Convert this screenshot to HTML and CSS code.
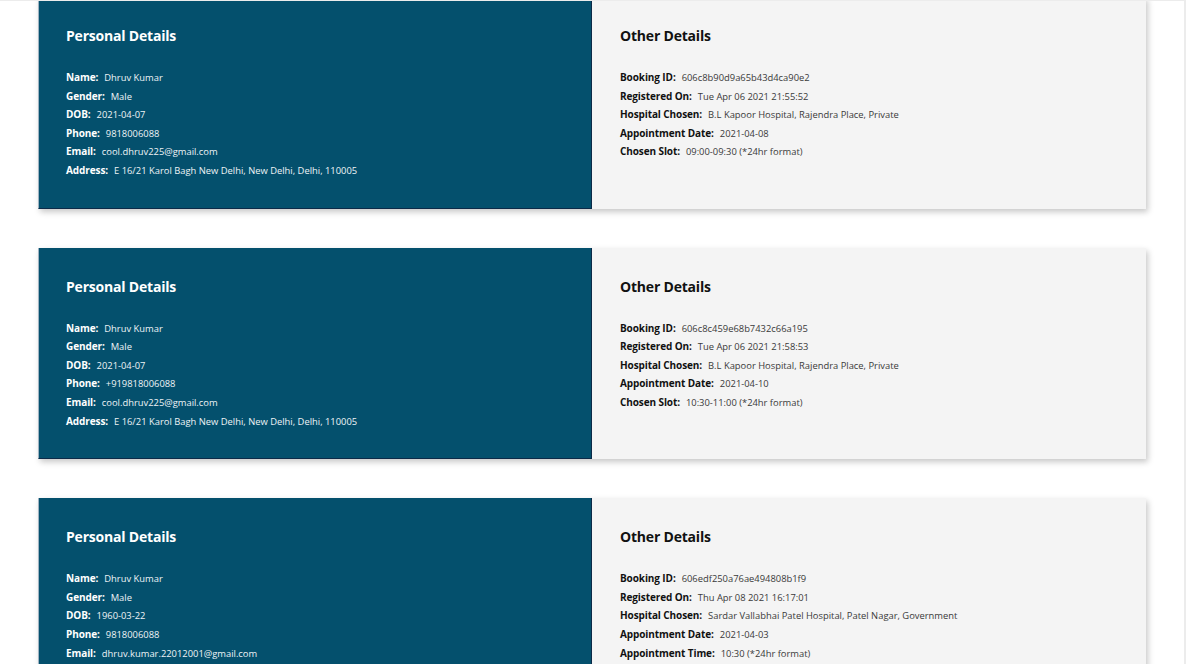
FILE: index.html
```html
<!DOCTYPE html>
<html>
<head>
<meta charset="utf-8">
<link rel="stylesheet" href="styles.css">
</head>
<body>
<div class="frame">
  <div class="list">
    <div class="card">
      <div class="panel personal">
        <h3 class="title">Personal Details</h3>
        <div class="rows">
          <div class="row"><span class="label">Name:</span><span class="value">Dhruv Kumar</span></div>
          <div class="row"><span class="label">Gender:</span><span class="value">Male</span></div>
          <div class="row"><span class="label">DOB:</span><span class="value">2021-04-07</span></div>
          <div class="row"><span class="label">Phone:</span><span class="value">9818006088</span></div>
          <div class="row"><span class="label">Email:</span><span class="value">cool.dhruv225@gmail.com</span></div>
          <div class="row"><span class="label">Address:</span><span class="value">E 16/21 Karol Bagh New Delhi, New Delhi, Delhi, 110005</span></div>
        </div>
      </div>
      <div class="panel other">
        <h3 class="title">Other Details</h3>
        <div class="rows">
          <div class="row"><span class="label">Booking ID:</span><span class="value">606c8b90d9a65b43d4ca90e2</span></div>
          <div class="row"><span class="label">Registered On:</span><span class="value">Tue Apr 06 2021 21:55:52</span></div>
          <div class="row"><span class="label">Hospital Chosen:</span><span class="value">B.L Kapoor Hospital, Rajendra Place, Private</span></div>
          <div class="row"><span class="label">Appointment Date:</span><span class="value">2021-04-08</span></div>
          <div class="row"><span class="label">Chosen Slot:</span><span class="value">09:00-09:30 (*24hr format)</span></div>
        </div>
      </div>
    </div>

    <div class="card">
      <div class="panel personal">
        <h3 class="title">Personal Details</h3>
        <div class="rows">
          <div class="row"><span class="label">Name:</span><span class="value">Dhruv Kumar</span></div>
          <div class="row"><span class="label">Gender:</span><span class="value">Male</span></div>
          <div class="row"><span class="label">DOB:</span><span class="value">2021-04-07</span></div>
          <div class="row"><span class="label">Phone:</span><span class="value">+919818006088</span></div>
          <div class="row"><span class="label">Email:</span><span class="value">cool.dhruv225@gmail.com</span></div>
          <div class="row"><span class="label">Address:</span><span class="value">E 16/21 Karol Bagh New Delhi, New Delhi, Delhi, 110005</span></div>
        </div>
      </div>
      <div class="panel other">
        <h3 class="title">Other Details</h3>
        <div class="rows">
          <div class="row"><span class="label">Booking ID:</span><span class="value">606c8c459e68b7432c66a195</span></div>
          <div class="row"><span class="label">Registered On:</span><span class="value">Tue Apr 06 2021 21:58:53</span></div>
          <div class="row"><span class="label">Hospital Chosen:</span><span class="value">B.L Kapoor Hospital, Rajendra Place, Private</span></div>
          <div class="row"><span class="label">Appointment Date:</span><span class="value">2021-04-10</span></div>
          <div class="row"><span class="label">Chosen Slot:</span><span class="value">10:30-11:00 (*24hr format)</span></div>
        </div>
      </div>
    </div>

    <div class="card">
      <div class="panel personal">
        <h3 class="title">Personal Details</h3>
        <div class="rows">
          <div class="row"><span class="label">Name:</span><span class="value">Dhruv Kumar</span></div>
          <div class="row"><span class="label">Gender:</span><span class="value">Male</span></div>
          <div class="row"><span class="label">DOB:</span><span class="value">1960-03-22</span></div>
          <div class="row"><span class="label">Phone:</span><span class="value">9818006088</span></div>
          <div class="row"><span class="label">Email:</span><span class="value">dhruv.kumar.22012001@gmail.com</span></div>
          <div class="row"><span class="label">Address:</span><span class="value">E 16/21 Karol Bagh New Delhi, New Delhi, Delhi, 110005</span></div>
        </div>
      </div>
      <div class="panel other">
        <h3 class="title">Other Details</h3>
        <div class="rows">
          <div class="row"><span class="label">Booking ID:</span><span class="value">606edf250a76ae494808b1f9</span></div>
          <div class="row"><span class="label">Registered On:</span><span class="value">Thu Apr 08 2021 16:17:01</span></div>
          <div class="row"><span class="label">Hospital Chosen:</span><span class="value">Sardar Vallabhai Patel Hospital, Patel Nagar, Government</span></div>
          <div class="row"><span class="label">Appointment Date:</span><span class="value">2021-04-03</span></div>
          <div class="row"><span class="label">Appointment Time:</span><span class="value">10:30 (*24hr format)</span></div>
        </div>
      </div>
    </div>
  </div>
</div>
</body>
</html>
```

FILE: styles.css
```css
html, body {
  margin: 0;
  padding: 0;
  background: #ffffff;
}

body {
  font-family: "Open Sans", "Noto Sans", "Liberation Sans", sans-serif;
}

.frame {
  width: 1186px;
  height: 664px;
  box-sizing: border-box;
  border-top: 1px solid #ececec;
  border-right: 2px solid #ececec;
  overflow: hidden;
}

.list {
  margin-top: -4px;
  padding: 0 38px;
  display: flex;
  flex-direction: column;
  gap: 39px;
}

.card {
  display: grid;
  grid-template-columns: 554px 554px;
  box-shadow: 2px 3px 6px rgba(0, 0, 0, 0.22);
}

.panel {
  padding: 29px 28px 28px;
}

.personal {
  background: #04506d;
  color: #ffffff;
  padding-left: 27px;
  border-left: 1px solid #9fb3c2;
  border-bottom: 1px solid #0b2a48;
  border-right: 1px solid #0b2a48;
}

.other {
  background: #f4f4f4;
  color: #111111;
}

.title {
  margin: 0 0 22px;
  font-size: 14px;
  line-height: 20px;
  font-weight: 700;
  letter-spacing: -0.2px;
}

.rows {
  display: flex;
  flex-direction: column;
}

.row {
  display: flex;
  align-items: baseline;
  height: 18.6px;
  line-height: 18.6px;
  white-space: nowrap;
}

.label {
  font-weight: 700;
  font-size: 10px;
  letter-spacing: -0.1px;
  margin-right: 6px;
}

.value {
  font-size: 9.4px;
}

.personal .value {
  color: #eef3f6;
}

.other .value {
  color: #3a3a3a;
}
```
